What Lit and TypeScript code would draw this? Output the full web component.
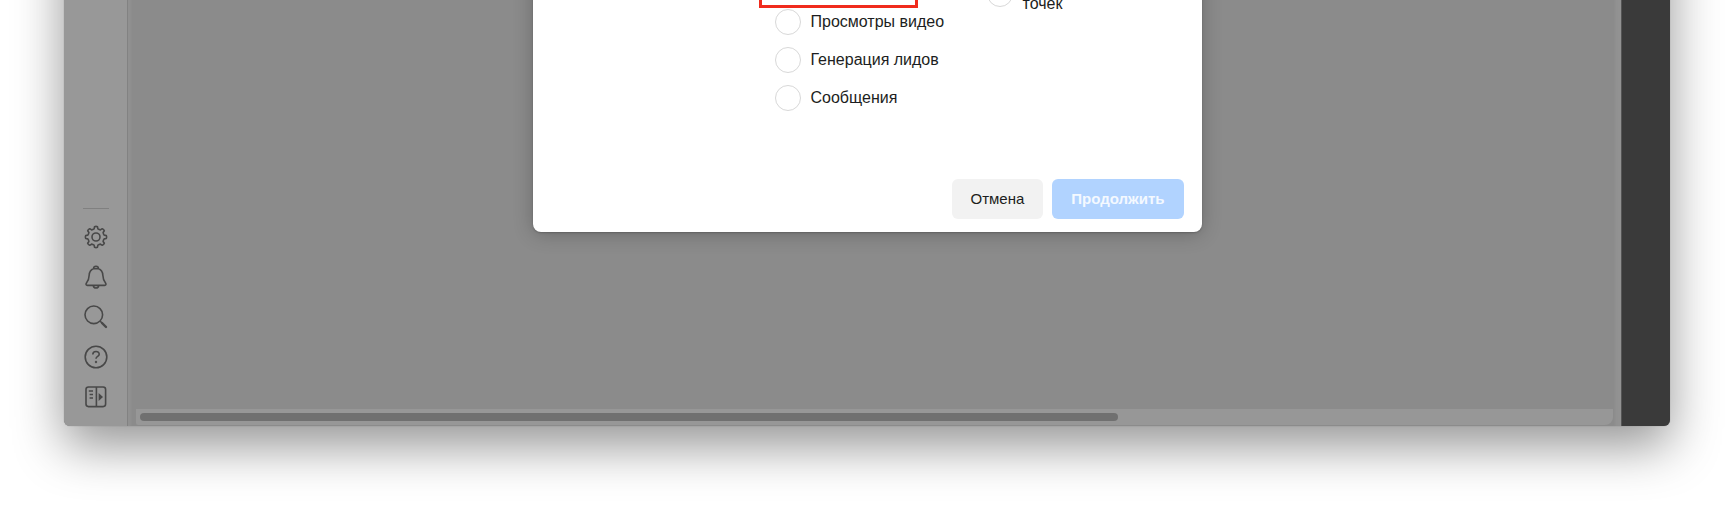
import { LitElement, html, css, svg } from "lit";
import { customElement } from "lit/decorators.js";

const gear = Array.from({ length: 8 }, (_, i) => {
  const point = (radius: number, degrees: number) => {
    const a = ((i * 45 + degrees - 90) * Math.PI) / 180;
    return `${(12 + radius * Math.cos(a)).toFixed(2)} ${(12 + radius * Math.sin(a)).toFixed(2)}`;
  };
  return `${i ? "L" : "M"}${point(8.4, -13)}L${point(10.4, -8)}Q${point(11, 0)} ${point(10.4, 8)}L${point(8.4, 13)}Q${point(8, 22.5)} ${point(8.4, 32)}`;
}).join("") + "Z";

const tools = [
  { label: "Настройки", icon: svg`<path d=${gear}/><circle cx="12" cy="12" r="4"/>` },
  {
    label: "Уведомления",
    icon: svg`<path d="M9.6 3.4C9.6 .6 14.4 .6 14.4 3.4C17.2 4.5 18.6 6.7 18.8 10C19 14 19.6 15.7 21.4 17.8C22.6 19.5 21.8 20.4 20.6 20.4H3.4C2.2 20.4 1.4 19.5 2.6 17.8C4.4 15.7 5 14 5.2 10C5.4 6.7 6.8 4.5 9.6 3.4Z"/><path d="M9.6 3.6H14.4M9.4 20.6C9.6 23.8 14.4 23.8 14.6 20.6"/>`,
  },
  { label: "Поиск", icon: svg`<circle cx="9.8" cy="9.8" r="8.8"/><path d="M16 16L18 18"/><path stroke-width="2.4" stroke-linecap="round" d="M18 18L22 22"/>` },
  {
    label: "Справка",
    icon: svg`<circle cx="12" cy="12" r="10.8"/><path d="M8.8 9.6C8.8 5.4 15.2 5.6 15.2 9.2C15.2 11.6 12 11.2 12 13.8"/><circle cx="12" cy="17" r=".4" fill="currentColor"/>`,
  },
  {
    label: "Развернуть меню",
    icon: svg`<rect x="2" y="2" width="19.6" height="19.6" rx="2.5"/><path d="M12.4 2V22M4.8 6H9M5.6 9.5H9M5.6 13H9"/><path fill="currentColor" stroke="none" d="M14.6 8L19 12L14.6 16Z"/>`,
  },
];

@customElement("app-root")
export class AppRoot extends LitElement {
  static styles = css`
    :host {
      display: flex;
      box-sizing: border-box;
      height: 100vh;
      padding: 0 64px 84px;
      overflow: hidden;
      background: #fff;
      font-family: "Liberation Sans", Arial, sans-serif;
      font-size: 16px;
      line-height: 20px;
      color: #1c1e21;
    }
    .window {
      position: relative;
      display: flex;
      flex: 1;
      min-width: 0;
      margin-top: -100px;
      border-radius: 0 0 6px 6px;
      background: #8b8b8b;
      box-shadow: 0 20px 50px rgba(0, 0, 0, 0.42), 0 0 1px rgba(0, 0, 0, 0.4);
    }
    .rail {
      display: flex;
      flex-direction: column;
      justify-content: flex-end;
      align-items: center;
      gap: 16px;
      box-sizing: border-box;
      width: 64px;
      padding-bottom: 17px;
      border-right: 1px solid #828282;
      border-radius: 0 0 0 6px;
      background: #989898;
    }
    .divider {
      width: 26px;
      height: 1px;
      margin: 0;
      border: 0;
      background: #808080;
    }
    .tool {
      display: block;
      width: 24px;
      height: 24px;
      padding: 0;
      border: 0;
      background: none;
      color: #484848;
    }
    .tool svg {
      display: block;
      fill: none;
      stroke: currentColor;
      stroke-width: 1.6;
      stroke-linejoin: round;
    }
    .canvas {
      display: flex;
      flex: 1;
      align-items: flex-end;
      min-width: 0;
      padding: 0 8px 1px;
      box-shadow: inset 5px 0 3px -2px #919191, inset -8px 0 3px -2px #929292;
    }
    .track {
      flex: 1;
      box-sizing: border-box;
      padding: 4px;
      border-radius: 0 0 8px 2px;
      background: #979797;
    }
    .thumb {
      width: 66.6%;
      height: 8px;
      border-radius: 4px;
      background: #707070;
    }
    .edge {
      box-sizing: border-box;
      width: 49px;
      border-left: 1px solid #555;
      border-radius: 0 0 6px 0;
      background: #3a3a3a;
    }
    .overlay {
      position: absolute;
      inset: 0;
      display: flex;
      justify-content: center;
      align-items: flex-end;
      padding-bottom: 194px;
    }
    .dialog {
      box-sizing: border-box;
      width: 669px;
      padding: 24px 18px 13px;
      border-radius: 8px;
      background: #fff;
      box-shadow: 0 2px 20px rgba(0, 0, 0, 0.24), 0 1px 2px rgba(0, 0, 0, 0.2);
    }
    .choices {
      display: grid;
      grid-template-columns: 212px 1fr;
      align-items: start;
      padding: 0 0 68px 224px;
    }
    .list {
      display: grid;
      gap: 12px;
    }
    .marked {
      box-sizing: border-box;
      width: 159px;
      height: 35px;
      margin: 0 0 1px -16px;
      border: 3px solid #f02b1d;
    }
    .option {
      display: flex;
      align-items: center;
      gap: 10px;
    }
    .option input {
      appearance: none;
      flex: none;
      width: 26px;
      height: 26px;
      margin: 0;
      border: 1px solid #d8d8d8;
      border-radius: 50%;
      background: #fff;
    }
    .lower {
      padding-top: 21px;
    }
    .actions {
      display: flex;
      justify-content: flex-end;
      gap: 9px;
    }
    .action {
      height: 40px;
      padding: 0 19px;
      border: 0;
      border-radius: 6px;
      background: #f2f2f2;
      color: inherit;
      font: inherit;
      font-size: 15px;
    }
    .primary {
      background: #b1d3ff;
      color: #f4f9ff;
      font-weight: bold;
    }
  `;

  render() {
    return html`
      <div class="window">
        <nav class="rail">
          <hr class="divider" />
          ${tools.map(
            (t) => html`<button class="tool" aria-label=${t.label}>
              <svg width="24" height="24" viewBox="0 0 24 24">${t.icon}</svg>
            </button>`
          )}
        </nav>
        <main class="canvas"><div class="track"><div class="thumb"></div></div></main>
        <div class="edge"></div>
        <div class="overlay">
          <form class="dialog" role="dialog">
            <div class="choices">
              <div>
                <div class="marked"></div>
                <div class="list">
                  ${["Просмотры видео", "Генерация лидов", "Сообщения"].map(
                    (name) => html`<label class="option"><input type="radio" name="goal" />${name}</label>`
                  )}
                </div>
              </div>
              <label class="option"><input type="radio" name="goal" /><span class="lower">точек</span></label>
            </div>
            <div class="actions">
              <button class="action" type="button">Отмена</button>
              <button class="action primary" type="button" disabled>Продолжить</button>
            </div>
          </form>
        </div>
      </div>
    `;
  }
}
